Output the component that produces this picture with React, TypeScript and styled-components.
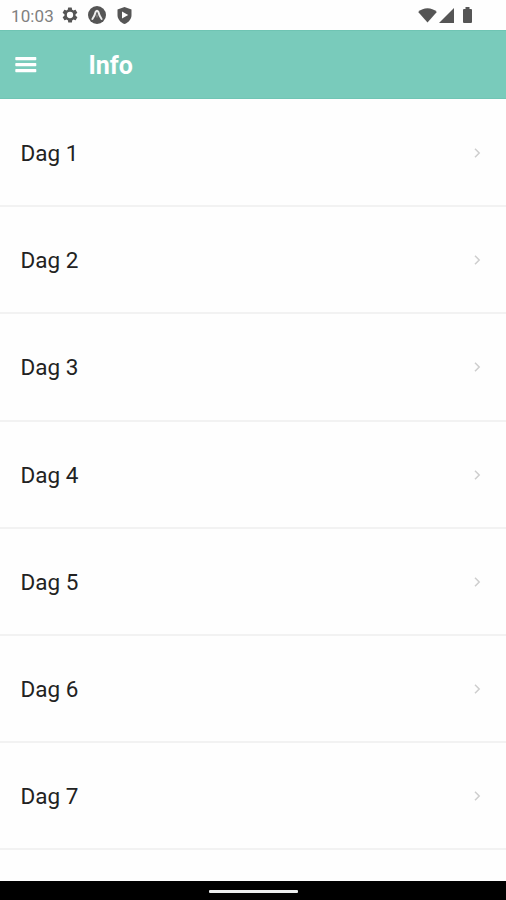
import React from "react";
import styled, { createGlobalStyle } from "styled-components";

const GlobalStyle = createGlobalStyle`
  * { box-sizing: border-box; }
  body { margin: 0; background: #fff; }
`;

const Screen = styled.div`
  display: flex;
  flex-direction: column;
  width: 100%;
  max-width: 506px;
  height: 900px;
  overflow: hidden;
  background: #fefefe;
  font-family: Roboto, "Liberation Sans", sans-serif;
`;

const StatusBar = styled.header`
  display: flex;
  justify-content: space-between;
  flex: 0 0 30px;
  padding: 0 34px 0 11px;
  color: #555;
`;

const StatusGroup = styled.div<{ $gap: number }>`
  display: flex;
  align-items: center;
  gap: ${(p) => p.$gap}px;

  svg { display: block; }
`;

const Clock = styled.time`
  width: 43px;
  margin-right: -2px;
  padding-top: 2px;
  color: #808080;
  font-size: 17px;
  line-height: 28px;
  letter-spacing: 0.1px;
`;

const AppBar = styled.div`
  display: flex;
  align-items: center;
  flex: 0 0 69px;
  padding: 0 15px;
  background: #79cbbb;
  border-top: 1px solid #6fc4b3;
  border-bottom: 1px solid #70c5b4;
`;

const MenuButton = styled.button`
  display: flex;
  width: 22px;
  margin-right: 51.5px;
  padding: 0;
  border: 0;
  background: none;
`;

const Title = styled.h1`
  margin: 2px 0 0;
  color: #fff;
  font-size: 25px;
  font-weight: 700;
  line-height: 30px;
`;

const List = styled.ul`
  flex: 1;
  margin: 0;
  padding: 1px 0 0;
  overflow: hidden;
  list-style: none;
`;

const Row = styled.li`
  display: flex;
  align-items: center;
  justify-content: space-between;
  height: 107.2px;
  padding: 1px 25px 0 20.5px;
  border-bottom: 2px solid #f2f2f2;
`;

const Label = styled.span`
  color: #222;
  font-size: 22.5px;
  line-height: 28px;
`;

const NavigationBar = styled.footer`
  display: flex;
  align-items: center;
  justify-content: center;
  flex: 0 0 19px;
  padding-top: 2px;
  background: #000;
`;

const HomeHandle = styled.div`
  width: 89px;
  height: 3px;
  border-radius: 1px;
  background: #eceeee;
`;

const SettingsIcon = () => (
  <svg width="18" height="18" viewBox="0 0 24 24" fill="currentColor">
    <path
      fillRule="evenodd"
      d="M19.4 13a7.8 7.8 0 0 0 0-2l2.1-1.7c.2-.1.3-.4.1-.6l-2-3.5c-.1-.2-.4-.3-.6-.2l-2.5 1a7.3 7.3 0 0 0-1.7-1l-.4-2.6a.5.5 0 0 0-.5-.4h-4a.5.5 0 0 0-.5.4L9 5a7.700 7.700 0 0 0-1.700 1L4.900 5c-.2-.1-.5 0-.6.2l-2 3.500c-.1.2-.1.5.1.6L4.600 11a7.900 7.900 0 0 0 0 2l-2.100 1.600c-.2.2-.3.4-.1.7l2 3.400c.1.2.4.3.6.2l2.500-1a7.300 7.300 0 0 0 1.700 1l.4 2.700c0 .2.2.4.5.4h4c.2 0 .4-.2.5-.4l.4-2.700a7.700 7.700 0 0 0 1.700-1l2.400 1c.2.1.5 0 .6-.2l2-3.400c.1-.3.1-.5-.1-.7zM12 16.200a4.200 4.200 0 1 1 0-8.400 4.200 4.200 0 0 1 0 8.400z"
    />
  </svg>
);

const ExpoIcon = () => (
  <svg width="18" height="18" viewBox="0 0 18 18">
    <circle cx="9" cy="9" r="9" fill="currentColor" />
    <path
      d="M4.400 13C6 11 7 8.500 7.700 5.800Q9 3.700 10.300 5.800C11 8.500 12 11 13.600 13"
      fill="none"
      stroke="#eee"
      strokeWidth="2"
      strokeLinecap="round"
    />
    <path d="M9 8.500v3" stroke="#999" strokeWidth="1" />
  </svg>
);

const ShieldIcon = () => (
  <svg width="19" height="17" viewBox="-2 0 19 17">
    <path d="M7.500 0 14.500 2.500V8c0 4.200-3 7.600-7 9-4-1.400-7-4.800-7-9V2.500z" fill="currentColor" />
    <path d="M5 4.500 11.200 8 5 11.500z" fill="#fff" />
  </svg>
);

const WifiIcon = () => (
  <svg width="19" height="15" viewBox="0 0 19 15" fill="currentColor">
    <path d="M9.500 14.500 .2 4C5.500-.9 13.500-.9 18.800 4z" />
  </svg>
);

const SignalIcon = () => (
  <svg width="15" height="15" viewBox="0 0 15 15" fill="currentColor">
    <path d="M15 0v15H0z" />
  </svg>
);

const BatterySlot = styled.span`
  display: flex;
  margin-left: 7px;
`;

const BatteryIcon = () => (
  <svg width="9" height="16" viewBox="0 0 9 16" fill="currentColor">
    <path d="M2.500 0h4v2h1.500q1 0 1 1v12q0 1-1 1H1q-1 0-1-1V3q0-1 1-1h1.500z" />
  </svg>
);

const MenuIcon = () => (
  <svg width="22" height="18" viewBox="0 0 22 18" fill="#fff">
    <rect x="0.300" y="1" width="21" height="3.200" rx="0.700" />
    <rect x="0.300" y="7" width="21" height="3.200" rx="0.700" />
    <rect x="0.300" y="13" width="21" height="3.200" rx="0.700" />
  </svg>
);

const ChevronIcon = () => (
  <svg width="8" height="12" viewBox="0 0 8 12" fill="none" stroke="#cecece" strokeWidth="1.500">
    <path d="M2 1.800 6.200 6 2 10.200" />
  </svg>
);

const days = ["Dag 1", "Dag 2", "Dag 3", "Dag 4", "Dag 5", "Dag 6", "Dag 7"];

export default function App() {
  return (
    <>
      <GlobalStyle />
      <Screen>
        <StatusBar>
          <StatusGroup $gap={9}>
            <Clock>10:03</Clock>
            <SettingsIcon />
            <ExpoIcon />
            <ShieldIcon />
          </StatusGroup>
          <StatusGroup $gap={2}>
            <WifiIcon />
            <SignalIcon />
            <BatterySlot>
              <BatteryIcon />
            </BatterySlot>
          </StatusGroup>
        </StatusBar>
        <AppBar>
          <MenuButton aria-label="Menu">
            <MenuIcon />
          </MenuButton>
          <Title>Info</Title>
        </AppBar>
        <List>
          {days.map((day) => (
            <Row key={day}>
              <Label>{day}</Label>
              <ChevronIcon />
            </Row>
          ))}
        </List>
        <NavigationBar>
          <HomeHandle />
        </NavigationBar>
      </Screen>
    </>
  );
}
